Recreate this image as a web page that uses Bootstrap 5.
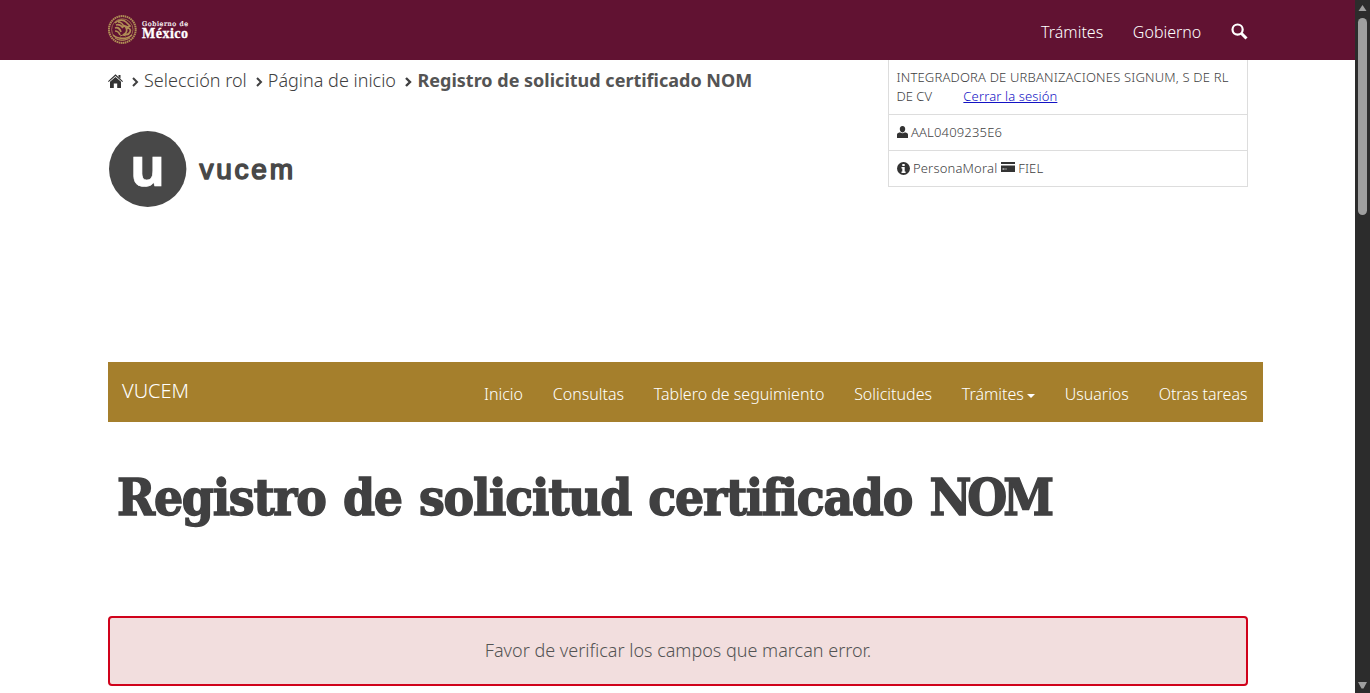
<!DOCTYPE html>
<html lang="es">
<head>
<meta charset="utf-8">
<title>VUCEM</title>
<link href="https://cdn.jsdelivr.net/npm/bootstrap@5.3.0/dist/css/bootstrap.min.css" rel="stylesheet">
<style>
body{font-family:"Noto Sans",sans-serif;font-weight:300;color:#404041;overflow:hidden;height:693px}
.page{width:1355px;height:693px;overflow:hidden}
.inner{width:1140px;margin-left:108px}
.gob-bar{background:#611232;height:60px}
.gob-bar a,.gold-bar a{color:#fff;text-decoration:none;font-size:16px;line-height:24px;white-space:nowrap}
.gob-bar a,.gold-bar .links a{font-weight:350}
.gob-links{gap:29.7px;padding-top:4px}
.gob-logo{height:32px;width:90px}
.top-row{height:302px}
.crumbs{font-size:18px;line-height:26px;padding-top:7px;white-space:nowrap}
.crumbs b{font-weight:700;color:#545454;margin-left:.5px}
.crumbs svg{flex:none}
.chev{margin:3px 5px 0 9px}
.vucem-logo{margin-top:27px;margin-left:1px;display:block}
.user-box{width:360px;font-size:13px;line-height:19px}
.user-box .cell{border:1px solid #ddd;border-top:0;padding:8px 7px 8px 7.5px}
.user-box .wide{letter-spacing:.18px}
.user-box a{color:#1212c4;margin-left:28px;letter-spacing:.13px}
.user-box svg{margin-top:-3px;vertical-align:-1px}
.user-box .card-glyph{vertical-align:1px}
.gold-bar{background:#a57f2c;width:1155px;height:60px;padding:0 15px 0 14px}
.gold-bar .brand{font-size:20px;font-weight:300;margin-top:-3px}
.gold-bar .links{gap:29.8px;padding-top:3px;margin-right:.5px}
.caret{display:inline-block;border:4px solid transparent;border-top-color:#fff;border-bottom:0;margin-left:3px;vertical-align:2px}
h1.title{font-family:"DejaVu Serif Condensed","DejaVu Serif",serif;font-stretch:condensed;font-weight:700;font-size:51px;line-height:60px;color:#404041;margin:45px 0 0 9px;letter-spacing:-1.25px;word-spacing:2.6px;white-space:nowrap;-webkit-text-stroke:1.4px #404041;height:149px}
h1.title .caps{letter-spacing:-4px}
.error-box{background:#f2dede;border:2px solid #d0021b;border-radius:4px;height:70px;font-size:18px;color:#545454;padding-bottom:2px}
.scroll-track{width:15px;background:#2c2c2c;top:0;right:0;height:693px}
</style>
</head>
<body>
<div class="page">
  <header class="gob-bar">
    <div class="inner d-flex justify-content-between align-items-center h-100">
      <svg class="gob-logo" viewBox="0 0 90 32">
        <g fill="none" stroke="#b08d55">
          <circle cx="14.3" cy="15.5" r="13.4" stroke-width="2" stroke-dasharray="1.6 .5"/>
          <circle cx="14.3" cy="15.5" r="10.7" stroke-width=".7"/>
          <path stroke-width="1.7" d="M7 9c3-3 8-4 11-1l4 4-2 1-3-1c3 4 2 7-2 9M8 11c3-1 5 0 7 3M7 14c3-1 5 1 6 4M7 17c2 0 4 1 5 4M10 8c3 0 5 2 6 5M19 14c3 0 4 2 3 4s-3 3-5 2M5 21c4 4 14 5 19 0"/>
          <path stroke-width="1" d="M7 24c4 3 10 3 15 0M12 22l3-1 3 1"/>
        </g>
        <text x="34" y="12.300" fill="#fff" stroke="#fff" stroke-width=".2" font-family="DejaVu Serif" font-size="6.500" textLength="46">Gobierno de</text>
        <text x="34" y="24" fill="#fff" stroke="#fff" stroke-width=".3" font-family="Liberation Serif" font-weight="700" font-size="14" textLength="46">México</text>
      </svg>
      <nav class="d-flex align-items-center gob-links">
        <a href="#">Trámites</a><a href="#">Gobierno</a>
        <svg width="17" height="17" viewBox="0 0 17 17" fill="none" stroke="#fff" style="margin-top:-2px"><circle cx="6.600" cy="6.600" r="5.100" stroke-width="2.200"/><path d="M10.500 10.500l5 5" stroke-width="3"/></svg>
      </nav>
    </div>
  </header>
  <main class="inner">
    <div class="top-row d-flex justify-content-between">
      <div>
        <div class="crumbs d-flex align-items-center">
          <svg width="15" height="14" viewBox="0 0 15 14" fill="#333" style="margin-top:1px"><path d="M0 7.200L7.500.3 15 7.200l-.7.7L7.500 1.900.7 7.900zM10.500 1h2v3.500l-2-1.800z"/><path d="M2 7.700L7.500 3 13 7.700V14H9.200V9.500H5.800V14H2z"/></svg>
          <svg class="chev" width="7" height="10" viewBox="0 0 7 10" fill="none" stroke="#404041" stroke-width="2"><path d="M1 1l4 4-4 4"/></svg>
          <span>Selección rol</span>
          <svg class="chev" width="7" height="10" viewBox="0 0 7 10" fill="none" stroke="#404041" stroke-width="2"><path d="M1 1l4 4-4 4"/></svg>
          <span>Página de inicio</span>
          <svg class="chev" width="7" height="10" viewBox="0 0 7 10" fill="none" stroke="#404041" stroke-width="2.400"><path d="M1 1l4 4-4 4"/></svg>
          <b>Registro de solicitud certificado NOM</b>
        </div>
        <svg class="vucem-logo" width="190" height="88" viewBox="0 -10 190 88">
          <ellipse cx="38.700" cy="39" rx="38.700" ry="38" fill="#484848"/>
          <text x="21" y="56" fill="#fff" stroke="#fff" stroke-width=".6" font-family="Noto Sans" font-weight="700" font-size="54" textLength="35" lengthAdjust="spacingAndGlyphs">u</text>
          <text x="90.500" y="48.500" fill="#484848" stroke="#484848" stroke-width="1.600" stroke-linejoin="round" font-family="Liberation Sans" font-size="28" textLength="93.500">vucem</text>
        </svg>
      </div>
      <div class="user-box">
        <div class="cell"><span class="wide">INTEGRADORA DE URBANIZACIONES SIGNUM, S DE RL</span><br>DE CV <a href="#">Cerrar la sesión</a></div>
        <div class="cell"><svg width="11" height="12" viewBox="0 0 11 12" fill="#333"><path d="M5.500 0C7.400 0 8.300 1.300 8.200 3.200 8.100 5 7 6.400 5.500 6.400S2.900 5 2.800 3.200C2.700 1.300 3.600 0 5.500 0zM0 12V8.500C0 7.300 1.500 6.800 3 6.300c1.500 1.200 3.500 1.200 5 0 1.500.5 3 1 3 2.200V12z"/></svg> <span class="wide">AAL0409235E6</span></div>
        <div class="cell"><svg width="13" height="13" viewBox="0 0 13 13" style="vertical-align:-2px"><circle cx="6.500" cy="6.500" r="6.500" fill="#333"/><path fill="#fff" d="M5.300 2h2.400v2H5.300zM4.500 5h3.200v4.500h.9V11H4.500V9.500h.8v-3h-.8z"/></svg> <span class="wide">PersonaMoral</span> <svg class="card-glyph" width="14" height="10" viewBox="0 0 14 10"><path fill="#333" d="M0 0h14v2H0zM0 3.500h14V10H0z"/><path fill="#fff" d="M1.500 6.500h2v1h-2zM4.500 6.500h1v1h-1z"/></svg> <span class="wide">FIEL</span></div>
      </div>
    </div>
    <nav class="gold-bar d-flex justify-content-between align-items-center">
      <a class="brand" href="#">VUCEM</a>
      <div class="links d-flex">
        <a href="#">Inicio</a><a href="#">Consultas</a><a href="#">Tablero de seguimiento</a><a href="#">Solicitudes</a><a href="#">Trámites<span class="caret"></span></a><a href="#">Usuarios</a><a href="#">Otras tareas</a>
      </div>
    </nav>
    <h1 class="title">Registro de solicitud certificado <span class="caps">NOM</span></h1>
    <div class="error-box d-flex align-items-center justify-content-center">Favor de verificar los campos que marcan error.</div>
  </main>
</div>
<div class="scroll-track position-fixed">
  <svg width="15" height="693" fill="#9f9f9f"><path d="M3.500 11L7.500 5l4 6z"/><rect x="3" y="18" width="9" height="197" rx="4.500"/><path d="M3 682h9l-3.500 6.500h-2z"/></svg>
</div>
<script src="https://cdn.jsdelivr.net/npm/bootstrap@5.3.0/dist/js/bootstrap.bundle.min.js"></script>
</body>
</html>
